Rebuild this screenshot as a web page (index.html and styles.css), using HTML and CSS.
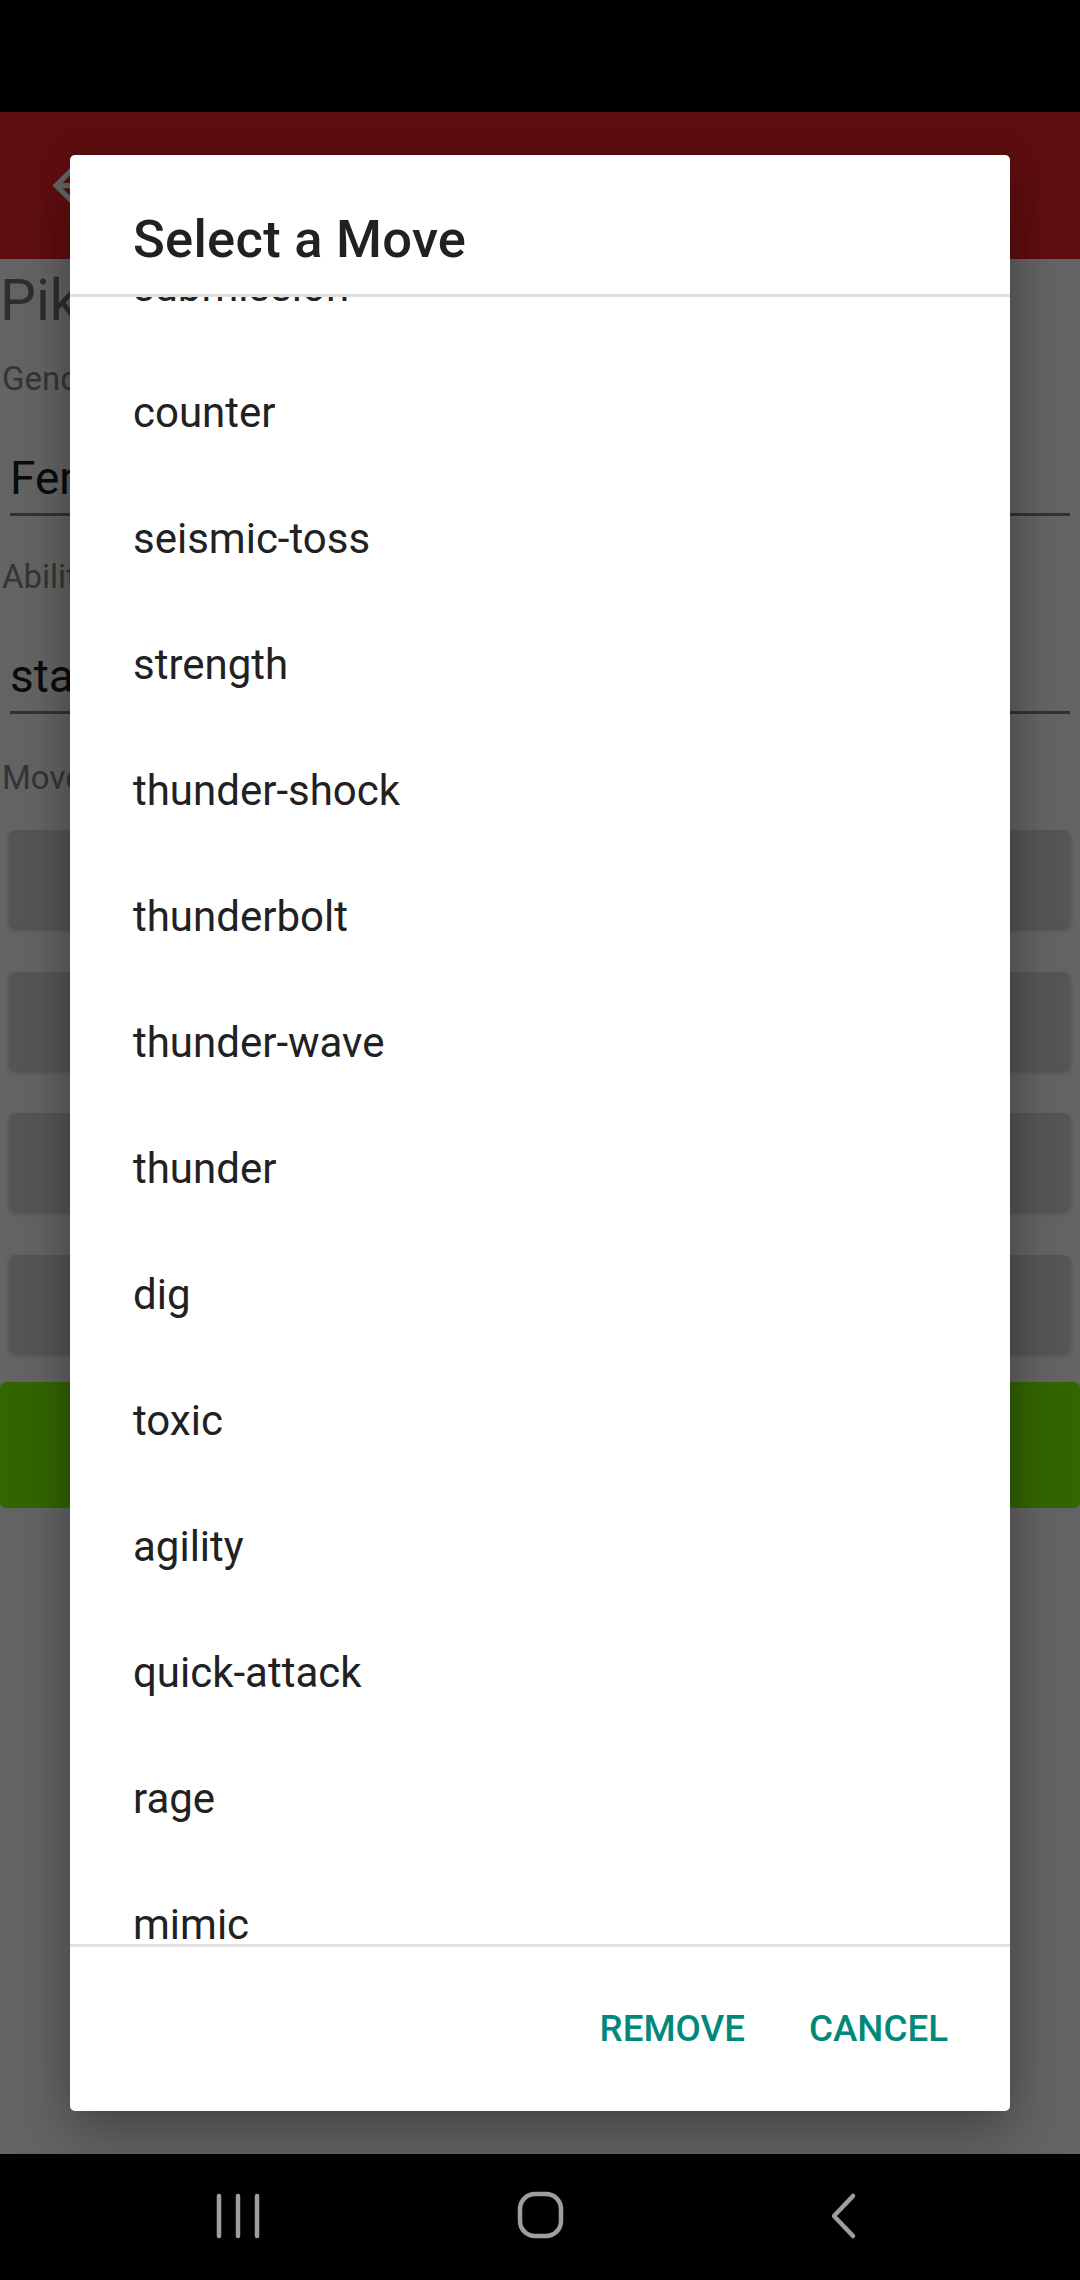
FILE: index.html
```html
<!DOCTYPE html>
<html lang="en">
<head>
<meta charset="utf-8">
<title>Select a Move</title>
<link rel="stylesheet" href="styles.css">
</head>
<body>
<div class="screen">
  <div class="status-bar"></div>
  <div class="app">
    <header class="toolbar">
      <svg class="back-icon" viewBox="0 0 24 24" aria-hidden="true"><path d="M20 11H7.83l5.59-5.59L12 4l-8 8 8 8 1.41-1.41L7.83 13H20v-2z"/></svg>
    </header>
    <main class="content">
      <div class="poke-name">Pikachu</div>
      <div class="label label-first">Gender</div>
      <div class="field">Female</div>
      <div class="label">Ability</div>
      <div class="field">static</div>
      <div class="label label-moves">Moves</div>
      <div class="move-buttons">
        <div class="move-btn"></div>
        <div class="move-btn"></div>
        <div class="move-btn"></div>
        <div class="move-btn"></div>
      </div>
      <div class="save-btn"></div>
    </main>
    <div class="scrim">
      <section class="dialog">
        <h1 class="dialog-title">Select a Move</h1>
        <div class="move-list">
          <ul class="move-list-inner">
            <li>submission</li>
            <li>counter</li>
            <li>seismic-toss</li>
            <li>strength</li>
            <li>thunder-shock</li>
            <li>thunderbolt</li>
            <li>thunder-wave</li>
            <li>thunder</li>
            <li>dig</li>
            <li>toxic</li>
            <li>agility</li>
            <li>quick-attack</li>
            <li>rage</li>
            <li>mimic</li>
            <li>double-team</li>
          </ul>
        </div>
        <div class="dialog-actions">
          <span class="action">REMOVE</span>
          <span class="action">CANCEL</span>
        </div>
      </section>
    </div>
  </div>
  <nav class="nav-bar">
    <svg class="nav-icon" viewBox="0 0 50 50" aria-hidden="true"><path d="M6 6V46M25 6V46M44 6V46"/></svg>
    <svg class="nav-icon" viewBox="0 0 50 50" aria-hidden="true"><rect x="5" y="4" width="41" height="42" rx="15" ry="15"/></svg>
    <svg class="nav-icon" viewBox="0 0 50 50" aria-hidden="true"><path d="M36 6L17 26L36 46"/></svg>
  </nav>
</div>
</body>
</html>
```
FILE: styles.css
```css
* { box-sizing: border-box; }

html, body {
  margin: 0;
  padding: 0;
  background: #000;
}

body {
  width: 1080px;
  height: 2280px;
  overflow: hidden;
  font-family: Roboto, "Noto Sans", "Liberation Sans", sans-serif;
}

.screen {
  width: 1080px;
  height: 2280px;
  display: flex;
  flex-direction: column;
}

.status-bar {
  height: 112px;
  background: #000;
  flex: none;
}

.app {
  position: relative;
  height: 2042px;
  flex: none;
  background: #fafafa;
  overflow: hidden;
}

.toolbar {
  height: 147px;
  background: #ed2328;
  display: flex;
  align-items: center;
  padding-left: 42px;
}

.back-icon {
  width: 63px;
  height: 63px;
  fill: #ffffff;
}

.content {
  display: flex;
  flex-direction: column;
}

.poke-name {
  margin-top: 8px;
  font-size: 57px;
  line-height: 67px;
  color: #737373;
  padding-left: 0;
}

.label {
  margin-top: 41px;
  font-size: 33px;
  line-height: 39px;
  color: #858585;
  padding-left: 2px;
}

.label-first { margin-top: 25px; }
.label-moves { margin-top: 44px; }

.field {
  margin: 53px 10px 0 10px;
  font-size: 46px;
  line-height: 54px;
  color: #1c1c1c;
  padding-bottom: 8px;
  border-bottom: 3px solid #808080;
}

.move-buttons {
  margin-top: 33px;
  display: flex;
  flex-direction: column;
  gap: 44.67px;
}

.move-btn {
  height: 97px;
  margin: 0 10px 0 9px;
  background: #d6d7d7;
  border-radius: 6px;
  box-shadow: 0 3px 5px rgba(0, 0, 0, 0.22);
}

.save-btn {
  margin-top: 30px;
  height: 126px;
  background: #7fff00;
  border-radius: 6px;
}

.scrim {
  position: absolute;
  inset: 0;
  background: rgba(0, 0, 0, 0.6);
  display: flex;
  align-items: center;
  justify-content: center;
}

.dialog {
  width: 940px;
  height: 1956px;
  background: #ffffff;
  border-radius: 5px;
  display: flex;
  flex-direction: column;
  box-shadow: 0 24px 60px rgba(0, 0, 0, 0.28), 0 0 30px rgba(0, 0, 0, 0.12);
  overflow: hidden;
}

.dialog-title {
  margin: 0;
  height: 142px;
  flex: none;
  padding: 54px 63px 0 63px;
  font-size: 52.5px;
  line-height: 61px;
  font-weight: 500;
  letter-spacing: 0.005em;
  color: #212121;
  border-bottom: 3px solid #e0e0e0;
}

.move-list {
  height: 1647px;
  flex: none;
  overflow: hidden;
}

.move-list-inner {
  list-style: none;
  margin: -73px 0 0 0;
  padding: 0;
}

.move-list-inner li {
  height: 126px;
  line-height: 126px;
  padding-left: 63px;
  font-size: 42px;
  color: #212121;
  white-space: nowrap;
}

.dialog-actions {
  flex: 1;
  border-top: 3px solid #e0e0e0;
  display: flex;
  justify-content: flex-end;
  align-items: center;
  gap: 64px;
  padding-right: 62px;
}

.action {
  font-size: 36.75px;
  font-weight: 500;
  color: #00897b;
  letter-spacing: 0;
  line-height: 44px;
}

.nav-bar {
  height: 126px;
  flex: none;
  background: #000;
  display: flex;
  align-items: center;
  justify-content: center;
  gap: 252px;
  padding-bottom: 4px;
}

.nav-icon {
  width: 50px;
  height: 50px;
  fill: none;
  stroke: #9e9e9e;
  stroke-width: 4.5;
  stroke-linecap: round;
  stroke-linejoin: round;
}
```
